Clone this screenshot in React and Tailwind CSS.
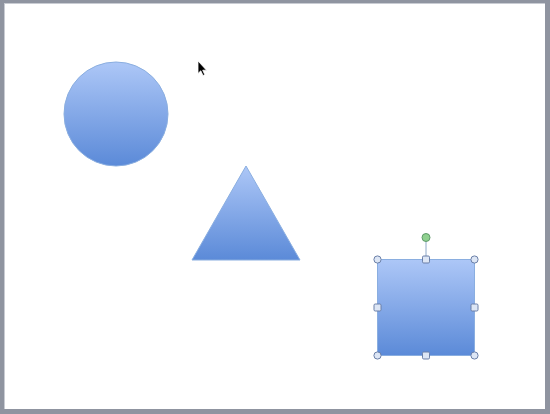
export default function App() {
  return (
    <div className="w-[550px] h-[414px] bg-[#8f94a0] pt-[3px] pl-[4px] pr-[5px] pb-[5px]">
      <div className="w-full h-full bg-white border-l border-t border-[#c9ccd3] relative">
        <svg width="540" height="405" viewBox="5 4 540 405" className="block absolute left-0 top-0">
          <defs>
            <linearGradient id="g" x1="0" y1="0" x2="0" y2="1">
              <stop offset="0" stopColor="#adc7f7" />
              <stop offset="1" stopColor="#5b8ad8" />
            </linearGradient>
          </defs>
          <circle cx="116" cy="114" r="52" fill="url(#g)" stroke="#8aaee0" strokeWidth="1" />
          <polygon points="246,166 300,260 192,260" fill="url(#g)" stroke="#8aaee0" strokeWidth="1" />
          <rect x="377.5" y="259.5" width="97" height="96" fill="url(#g)" stroke="#8aaee0" strokeWidth="1" />
          <line x1="426" y1="241" x2="426" y2="259" stroke="#8ea8c8" strokeWidth="1" />
          <circle cx="426" cy="237.5" r="4" fill="#8fd08f" stroke="#5e9a6a" strokeWidth="1" />
          {[[377.5, 259.5], [474.5, 259.5], [377.5, 355.5], [474.5, 355.5]].map(([x, y], i) => (
            <circle key={i} cx={x} cy={y} r="3.6" fill="#dde6f5" stroke="#6a7fa8" strokeWidth="1" />
          ))}
          {[[426, 259.5], [426, 355.5], [377.5, 307.5], [474.5, 307.5]].map(([x, y], i) => (
            <rect key={i} x={x - 3.5} y={y - 3.5} width="7" height="7" rx="1.2" fill="#dde6f5" stroke="#6a7fa8" strokeWidth="1" />
          ))}
          <path d="M198 61 L198 73.5 L200.8 70.8 L203 75.5 L204.8 74.7 L202.7 70.2 L206.5 70.2 Z" fill="#000" stroke="#fff" strokeWidth="0.8" />
        </svg>
      </div>
    </div>
  );
}
